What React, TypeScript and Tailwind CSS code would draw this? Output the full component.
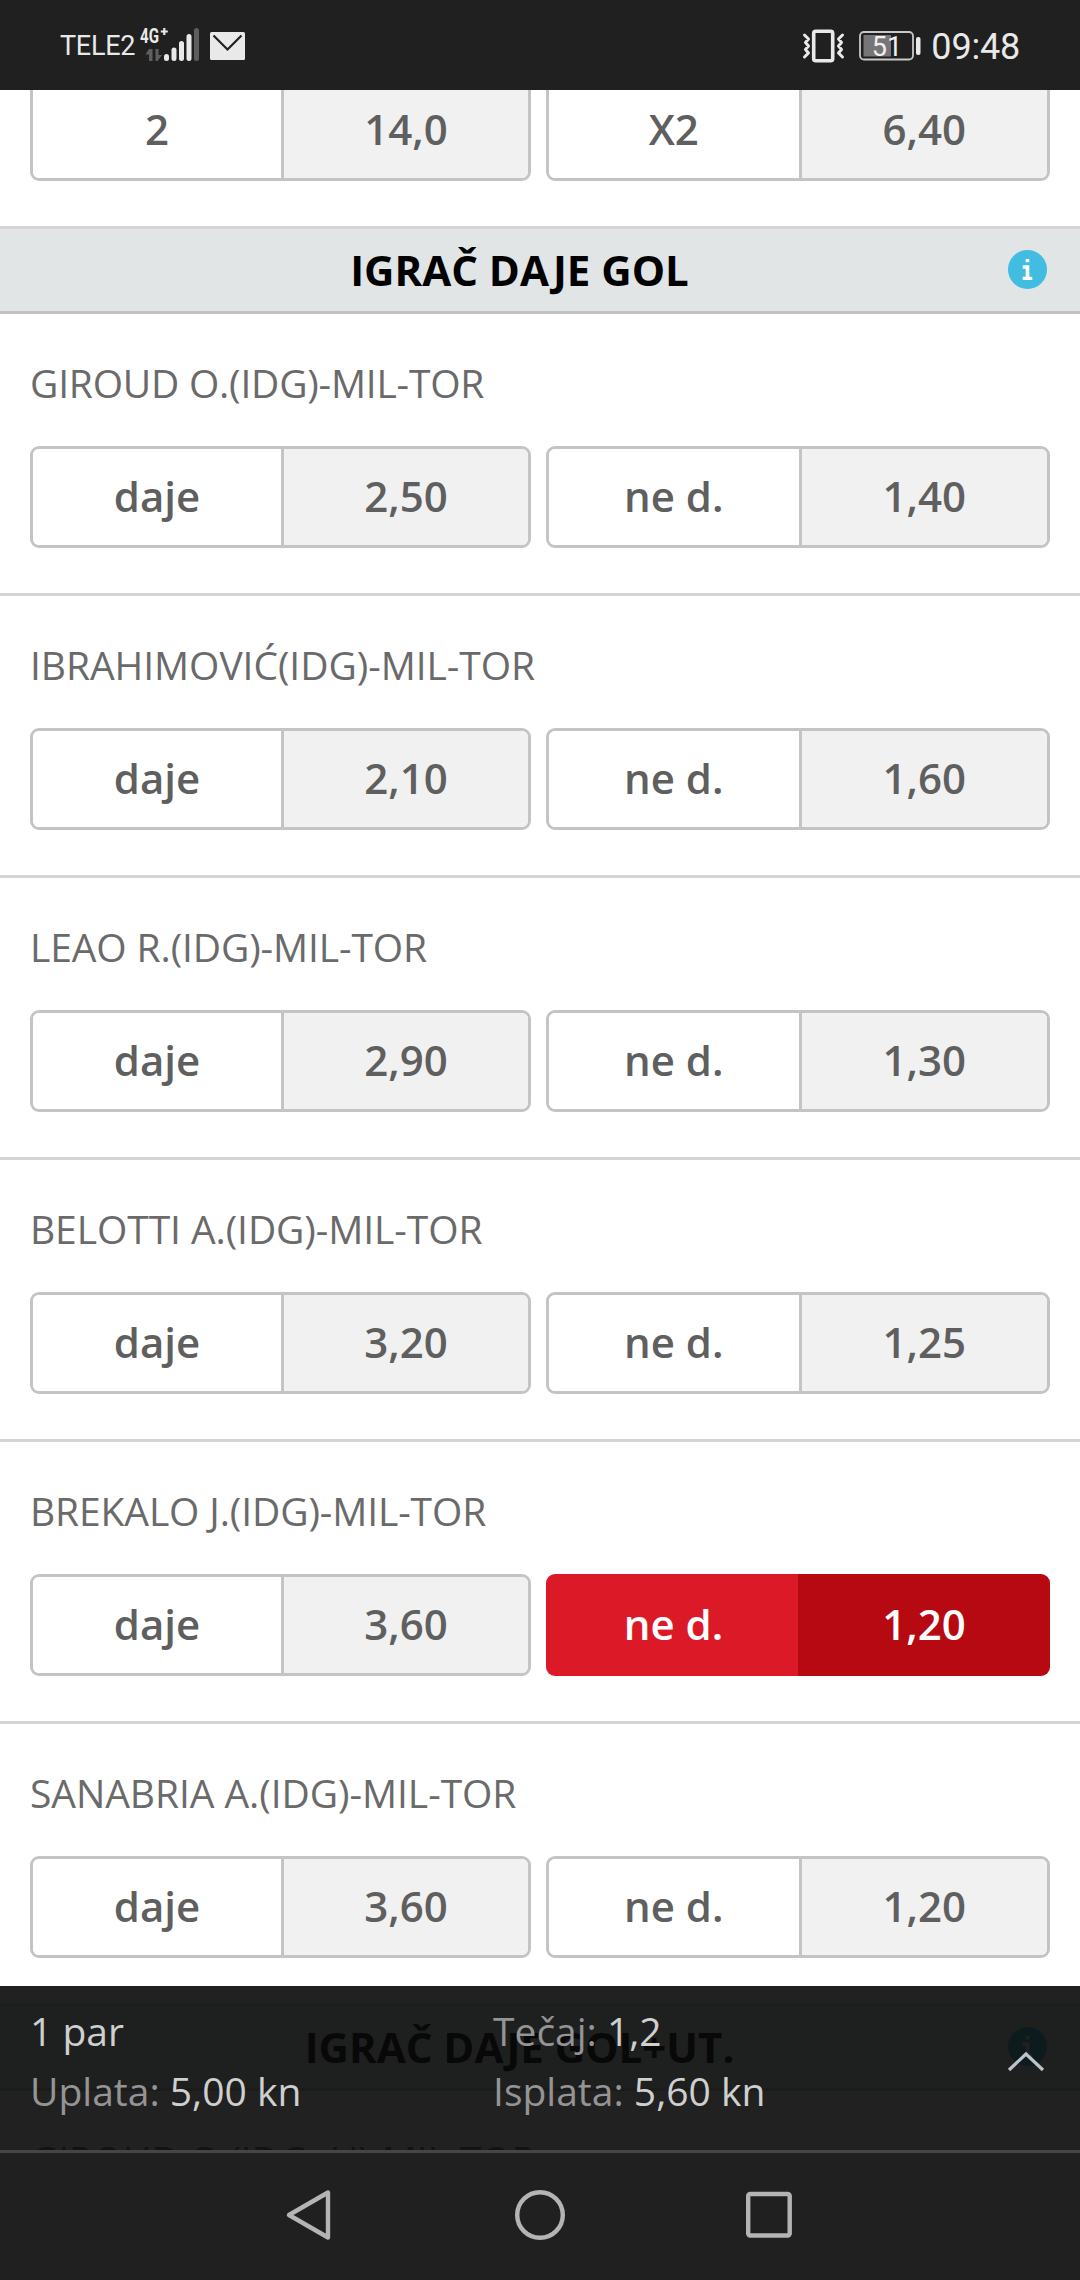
import React from "react";

type Odd = { label: string; value: string; active?: boolean };
type Player = { name: string; tracking: string; odds: [Odd, Odd] };

const player = (name: string, tracking: string, yes: string, no: string, active = false): Player => ({
  name,
  tracking,
  odds: [
    { label: "daje", value: yes },
    { label: "ne d.", value: no, active },
  ],
});

const players: Player[] = [
  player("GIROUD O.(IDG)-MIL-TOR", "tracking-[-0.22px]", "2,50", "1,40"),
  player("IBRAHIMOVIĆ(IDG)-MIL-TOR", "tracking-[-0.06px]", "2,10", "1,60"),
  player("LEAO R.(IDG)-MIL-TOR", "tracking-[-0.12px]", "2,90", "1,30"),
  player("BELOTTI A.(IDG)-MIL-TOR", "tracking-[-0.08px]", "3,20", "1,25"),
  player("BREKALO J.(IDG)-MIL-TOR", "tracking-[-0.12px]", "3,60", "1,20", true),
  player("SANABRIA A.(IDG)-MIL-TOR", "tracking-[-0.06px]", "3,60", "1,20"),
];

const hiddenPlayer = player("GIROUD O.(IDG+U)-MIL-TOR", "tracking-[-0.18px]", "2,50", "1,40");

function OddButton({ odd }: { odd: Odd }) {
  if (odd.active) {
    return (
      <button className="grid h-[102px] grid-cols-2 overflow-hidden rounded-[9px] text-[42px] leading-[98px] font-semibold text-white">
        <span className="bg-[#dc1a27] pt-px pl-[3px]">{odd.label}</span>
        <span className="bg-[#b70912] pt-px">{odd.value}</span>
      </button>
    );
  }
  return (
    <button className="grid h-[102px] grid-cols-[248fr_247fr] overflow-hidden rounded-[9px] border-[3px] border-[#c4c4c4] text-[42px] leading-[94px] font-semibold text-[#5f5f5f]">
      <span className="bg-white">{odd.label}</span>
      <span className="border-l-[3px] border-[#c4c4c4] bg-[#f1f1f1]">{odd.value}</span>
    </button>
  );
}

function OddRow({ odds }: { odds: Odd[] }) {
  return (
    <div className="grid grid-cols-[501px_504px] gap-[15px]">
      {odds.map((o) => (
        <OddButton key={o.label} odd={o} />
      ))}
    </div>
  );
}

function InfoIcon() {
  return (
    <svg className="mb-px h-[39px] w-[39px]" viewBox="0 0 39 39">
      <circle cx="19.5" cy="19.5" r="19.5" fill="#40bde0" />
      <path d="M17.700 9h3.600v3.300h-3.600zM14.700 15.300h6.600v11.400h3V30h-9.600v-3.300h3v-7.900h-3z" fill="#fff" />
    </svg>
  );
}

function SectionHeader({ children }: { children: React.ReactNode }) {
  return (
    <header className="flex h-[85px] items-center border-b-[3px] border-[#bfc4c8] bg-[#e1e5e5] pr-[33px]">
      <h2 className="flex-1 pl-[31px] text-center text-[42px] leading-[82px] font-bold text-black">{children}</h2>
      <InfoIcon />
    </header>
  );
}

function PlayerSection({ item }: { item: Player }) {
  return (
    <section className="h-[282px] shrink-0 border-b-[3px] border-[#d4d4d4] px-[30px] pt-[43px]">
      <h3 className={`mb-[37px] text-[39px] leading-[52px] text-[#6a6a6a] ${item.tracking}`}>{item.name}</h3>
      <OddRow odds={item.odds} />
    </section>
  );
}

function StatusBar() {
  return (
    <div className="flex h-[90px] shrink-0 items-center bg-[#202020] pr-[60px] pl-[60px] font-[Roboto,sans-serif] text-[#e9e9e9]">
      <span className="w-[80px] pt-[2px] text-[27px] leading-[40px] tracking-[-0.25px]">TELE2</span>
      <svg className="h-[36px] w-[60px]" viewBox="140 27 60 36">
        <text x="140" y="42.800" fontSize="20.600" fontWeight="700" fill="#e9e9e9" textLength="19" lengthAdjust="spacingAndGlyphs">
          4G
        </text>
        <path d="M164.300 28v7M160.800 31.500h7" stroke="#e9e9e9" strokeWidth="2.200" fill="none" />
        <path d="M149 49h3.500v12H149v-6.500h-3.500zM155.500 49h3v6h3.500l-4.500 6h-2z" fill="#5e5e5e" />
        <g strokeWidth="5" strokeLinecap="round" stroke="#e9e9e9">
          <path d="M166.500 56.500v2M174 50v8.500M181.500 43.500v15M189 36.500v22" />
          <path d="M196.500 30.500v28" stroke="#5e5e5e" />
        </g>
      </svg>
      <svg className="mt-px ml-[10px] h-[28px] w-[35px]" viewBox="0 0 35 28">
        <rect width="35" height="28" rx="1.500" fill="#e9e9e9" />
        <path d="M3.500 3.500L17.500 17.500L31.500 3.500" stroke="#202020" strokeWidth="2.200" fill="none" />
      </svg>
      <div className="flex-1" />
      <svg className="mt-[2px] h-[34px] w-[43px]" viewBox="0 0 43 34" fill="none" stroke="#e9e9e9" strokeLinecap="round" strokeLinejoin="round">
        <rect x="11.700" y="2.200" width="19" height="29.600" rx="2" strokeWidth="3.600" />
        <path d="M2.500 6l4 4-3 3.500 3 3.500-3 3.500 3 3.500-4 4M40.500 6l-4 4 3 3.500-3 3.500 3 3.500-3 3.500 4 4" strokeWidth="3" />
      </svg>
      <svg className="mt-[2px] ml-[14px] h-[30px] w-[63px]" viewBox="0 0 63 30">
        <rect x="1" y="1" width="53" height="27.500" rx="4" fill="none" stroke="#c8c8c8" strokeWidth="1.800" />
        <rect x="4.500" y="4" width="27.500" height="21.500" fill="#767676" />
        <text x="12.800" y="24.500" fontSize="27" fill="#efefef">
          51
        </text>
        <rect x="57" y="6" width="4.500" height="18" rx="2" fill="#e9e9e9" />
      </svg>
      <span className="ml-[9px] pt-[3px] text-[36px] leading-[50px] tracking-[-0.2px]">09:48</span>
    </div>
  );
}

function Amount({ label, value }: { label?: string; value: string }) {
  return (
    <div className="text-[#949494]">
      {label && <span>{label} </span>}
      <span className="text-[#cfcfcf]">{value}</span>
    </div>
  );
}

function BetSlip() {
  return (
    <aside className="absolute inset-x-0 bottom-0 flex h-[167px] border-b-[3px] border-[#464646] bg-[#090909]/90 bg-clip-padding pt-[15px] pl-[30px] text-[39px] leading-[60px]">
      <div className="w-[463px]">
        <Amount value="1 par" />
        <Amount label="Uplata:" value="5,00 kn" />
      </div>
      <div className="flex-1">
        <Amount label="Tečaj:" value="1,2" />
        <Amount label="Isplata:" value="5,60 kn" />
      </div>
      <svg className="mt-[50px] mr-[34px] h-[22px] w-[40px]" viewBox="0 0 40 22">
        <path d="M3 19L20 3L37 19" fill="none" stroke="#bcc3cb" strokeWidth="3.200" />
      </svg>
    </aside>
  );
}

function NavBar() {
  return (
    <nav className="flex h-[127px] shrink-0 items-center justify-center gap-[180px] bg-[#202020] pb-[3px]">
      <svg className="h-[52px] w-[52px]" viewBox="0 0 52 52" fill="none" stroke="#b4b4b4" strokeWidth="4.400" strokeLinejoin="round">
        <path d="M46 3.500v45L7 26z" />
      </svg>
      <svg className="h-[52px] w-[52px]" viewBox="0 0 52 52" fill="none" stroke="#b4b4b4" strokeWidth="4.400">
        <circle cx="26" cy="26" r="22.800" />
      </svg>
      <svg className="h-[52px] w-[52px]" viewBox="0 0 52 52" fill="none" stroke="#b4b4b4" strokeWidth="4.400">
        <rect x="2.200" y="5" width="41.500" height="41.500" rx="2" />
      </svg>
    </nav>
  );
}

export default function App() {
  return (
    <div className="flex h-[2280px] w-[1080px] flex-col overflow-hidden bg-white font-['Open_Sans',sans-serif]">
      <StatusBar />
      <main className="relative flex-1 overflow-hidden">
        <div className="-mt-[11px] border-b-[3px] border-[#d4d4d4] px-[30px] pb-[45px]">
          <OddRow
            odds={[
              { label: "2", value: "14,0" },
              { label: "X2", value: "6,40" },
            ]}
          />
        </div>
        <SectionHeader>
          IGRAČ D<span className="tracking-[4px]">A</span>JE GOL
        </SectionHeader>
        {players.map((p) => (
          <PlayerSection key={p.name} item={p} />
        ))}
        <SectionHeader>
          IGRAČ D<span className="tracking-[3px]">A</span>JE GOL+UT.
        </SectionHeader>
        <PlayerSection item={hiddenPlayer} />
        <BetSlip />
      </main>
      <NavBar />
    </div>
  );
}
